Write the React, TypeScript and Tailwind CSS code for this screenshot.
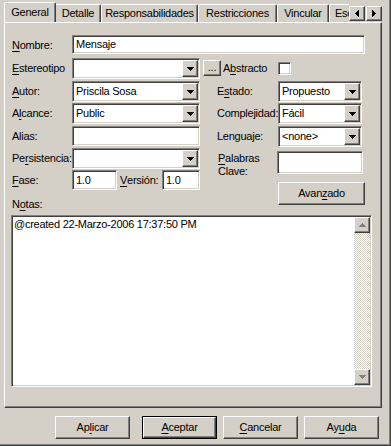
import React from "react";

const SUNKEN =
  "border border-t-[#808080] border-l-[#808080] border-b-white border-r-white shadow-[inset_1px_1px_0_#404040,inset_-1px_-1px_0_#d4d0c8]";
const RAISED =
  "border border-t-white border-l-white border-b-[#404040] border-r-[#404040] shadow-[inset_-1px_-1px_0_#808080]";

const U = ({ children }: { children: React.ReactNode }) => (
  <span className="underline underline-offset-[2px] decoration-1">{children}</span>
);

const DownArrow = ({ color = "#000" }: { color?: string }) => (
  <svg width="7" height="4" viewBox="0 0 7 4" shapeRendering="crispEdges">
    <path d="M0 0H7V1H6V2H5V3H4V4H3V3H2V2H1V1H0Z" fill={color} />
  </svg>
);

const UpArrow = ({ color = "#000" }: { color?: string }) => (
  <svg width="7" height="4" viewBox="0 0 7 4" shapeRendering="crispEdges">
    <path d="M3 0H4V1H5V2H6V3H7V4H0V3H1V2H2V1H3Z" fill={color} />
  </svg>
);

const SideArrow = ({ dir }: { dir: "left" | "right" }) => (
  <svg width="4" height="7" viewBox="0 0 4 7" shapeRendering="crispEdges">
    {dir === "left" ? (
      <path d="M0 3H1V2H2V1H3V0H4V7H3V6H2V5H1V4H0Z" fill="#000" />
    ) : (
      <path d="M0 0H1V1H2V2H3V3H4V4H3V5H2V6H1V7H0Z" fill="#000" />
    )}
  </svg>
);

const TextBox = ({ value = "", className = "" }: { value?: string; className?: string }) => (
  <div className={`${SUNKEN} bg-white flex items-center pl-[3px] whitespace-nowrap overflow-hidden ${className}`}>
    {value}
  </div>
);

const Combo = ({ value = "", className = "" }: { value?: string; className?: string }) => (
  <div className={`${SUNKEN} bg-white h-[21px] flex ${className}`}>
    <div className="flex-1 flex items-center pl-[3px] whitespace-nowrap overflow-hidden">{value}</div>
    <div className={`${RAISED} bg-[#d4d0c8] w-[16px] my-[1px] mr-[1px] flex items-center justify-center`}>
      <DownArrow />
    </div>
  </div>
);

const Label = ({ children, className = "w-[60px]" }: { children: React.ReactNode; className?: string }) => (
  <div className={`${className} shrink-0 h-[21px] flex items-center whitespace-nowrap`}>{children}</div>
);

const tabs = [
  { name: "General", w: "w-[52px]" },
  { name: "Detalle", w: "w-[45px]" },
  { name: "Responsabilidades", w: "w-[97px]" },
  { name: "Restricciones", w: "w-[79px]" },
  { name: "Vincular", w: "w-[52px]" },
  { name: "Escenarios", w: "w-[64px]" },
];

export default function App() {
  return (
    <div
      className="w-[391px] h-[446px] bg-[#d4d0c8] text-black text-[11px] tracking-[-0.25px] leading-[13px] flex flex-col shadow-[inset_-1px_-1px_0_#404040,inset_-2px_-2px_0_#808080] overflow-hidden"
      style={{ fontFamily: '"Liberation Sans", Arial, sans-serif' }}
    >
      {/* Tabs */}
      <div className="h-[22px] flex items-end pl-[4px] w-[382px]">
        <div className="flex items-end flex-1 h-full overflow-hidden">
          {tabs.map((t, i) =>
            i === 0 ? (
              <div
                key={t.name}
                className={`${t.w} shrink-0 h-[21px] mb-[-1px] relative z-10 bg-[#d4d0c8] border-t border-l border-r border-t-white border-l-white border-r-[#404040] shadow-[inset_-1px_0_0_#808080] rounded-t-[2px] flex items-center justify-center pb-[2px]`}
              >
                {t.name}
              </div>
            ) : (
              <div
                key={t.name}
                className={`${t.w} shrink-0 h-[18px] border-t border-r border-t-white border-r-[#404040] shadow-[inset_-1px_0_0_#808080] rounded-tr-[2px] flex items-center justify-center whitespace-nowrap ${
                  i === 1 ? "" : "border-l border-l-white rounded-tl-[2px]"
                }`}
              >
                {t.name}
              </div>
            )
          )}
        </div>
        <div className="flex mb-[1px] gap-[1px]">
          <div className={`${RAISED} w-[16px] h-[15px] flex items-center justify-center`}>
            <SideArrow dir="left" />
          </div>
          <div className={`${RAISED} w-[16px] h-[15px] flex items-center justify-center`}>
            <SideArrow dir="right" />
          </div>
        </div>
      </div>

      {/* Panel */}
      <div className="ml-[4px] w-[378px] h-[386px] border border-t-white border-l-white border-b-[#404040] border-r-[#404040] shadow-[inset_-1px_-1px_0_#808080] pl-[7px] pt-[12px] flex flex-col">
        {/* Nombre */}
        <div className="flex items-start">
          <Label className="w-[60px] h-[19px]">
            <U>N</U>ombre:
          </Label>
          <TextBox value="Mensaje" className="w-[293px] h-[19px]" />
        </div>

        {/* Estereotipo / Abstracto */}
        <div className="flex items-start mt-[2px]">
          <Label>
            <U>E</U>stereotipo
          </Label>
          <Combo className="w-[128px]" />
          <div className={`${RAISED} ml-[3px] mt-[2px] w-[18px] h-[16px] flex items-center justify-center pb-[2px]`}>
            ...
          </div>
          <Label className="w-[55px] ml-[2px]">
            A<U>b</U>stracto
          </Label>
          <div className={`${SUNKEN} bg-white w-[13px] h-[13px] mt-[4px]`} />
        </div>

        {/* Autor / Estado */}
        <div className="flex items-start mt-[2px]">
          <Label>
            <U>A</U>utor:
          </Label>
          <Combo value="Priscila Sosa" className="w-[128px]" />
          <Label className="w-[61px] ml-[17px]">
            E<U>s</U>tado:
          </Label>
          <Combo value="Propuesto" className="w-[84px]" />
        </div>

        {/* Alcance / Complejidad */}
        <div className="flex items-start mt-[1px]">
          <Label>
            A<U>l</U>cance:
          </Label>
          <Combo value="Public" className="w-[128px]" />
          <Label className="w-[61px] ml-[17px]">Complejidad:</Label>
          <Combo value="Fácil" className="w-[84px]" />
        </div>

        {/* Alias / Lenguaje */}
        <div className="flex items-start mt-[2px]">
          <Label className="w-[60px] h-[20px]">Alias:</Label>
          <TextBox className="w-[128px] h-[20px]" />
          <Label className="w-[61px] ml-[17px]">Lenguaje:</Label>
          <Combo value="<none>" className="w-[84px]" />
        </div>

        {/* Persistencia, Fase, Notas | Palabras Clave, Avanzado */}
        <div className="flex items-start mt-[1px]">
          <div className="flex flex-col w-[188px]">
            <div className="flex items-start">
              <Label>
                Pe<U>r</U>sistencia:
              </Label>
              <Combo className="w-[128px]" />
            </div>
            <div className="flex items-start mt-[1px]">
              <Label className="w-[60px] h-[20px]">
                <U>F</U>ase:
              </Label>
              <TextBox value="1.0" className="w-[45px] h-[20px]" />
              <Label className="w-[42px] ml-[3px] h-[20px]">
                <U>V</U>ersión:
              </Label>
              <TextBox value="1.0" className="w-[38px] h-[20px]" />
            </div>
            <div className="mt-[6px] h-[14px] leading-[14px]">
              N<U>o</U>tas:
            </div>
          </div>
          <div className="flex flex-col ml-[18px]">
            <div className="flex items-start mt-[3px]">
              <div className="w-[59px] pt-[1px] leading-[13px]">
                <U>P</U>alabras
                <br />
                Clave:
              </div>
              <TextBox className="w-[86px] h-[23px]" />
            </div>
            <div className={`${RAISED} ml-[60px] mt-[4px] w-[87px] h-[23px] flex items-center justify-center`}>
              Avan<U>z</U>ado
            </div>
          </div>
        </div>

        {/* Notas memo */}
        <div className={`${SUNKEN} bg-white ml-[-1px] mt-[4px] w-[361px] h-[172px] flex`}>
          <div className="flex-1 pl-[2px] pt-[2px] whitespace-nowrap overflow-hidden">
            @created 22-Marzo-2006 17:37:50 PM
          </div>
          <div className="w-[16px] my-[1px] mr-[1px] flex flex-col">
            <div className={`${RAISED} h-[16px] flex items-center justify-center bg-[#d4d0c8]`}>
              <UpArrow color="#808080" />
            </div>
            <div className="flex-1 bg-[image:repeating-conic-gradient(#d4d0c8_0_25%,#ffffff_0_50%)] bg-[length:2px_2px]" />
            <div className={`${RAISED} h-[16px] flex items-center justify-center bg-[#d4d0c8]`}>
              <DownArrow color="#808080" />
            </div>
          </div>
        </div>
      </div>

      {/* Bottom buttons */}
      <div className="flex mt-[8px] pl-[55px]">
        <div className={`${RAISED} w-[75px] h-[23px] flex items-center justify-center`}>
          Ap<U>l</U>icar
        </div>
        <div className="ml-[12px] w-[75px] h-[23px] border border-black flex">
          <div className={`${RAISED} flex-1 flex items-center justify-center`}>
            <U>A</U>ceptar
          </div>
        </div>
        <div className={`${RAISED} ml-[6px] w-[75px] h-[23px] flex items-center justify-center`}>
          <U>C</U>ancelar
        </div>
        <div className={`${RAISED} ml-[6px] w-[75px] h-[23px] flex items-center justify-center`}>
          Ay<U>u</U>da
        </div>
      </div>
    </div>
  );
}
